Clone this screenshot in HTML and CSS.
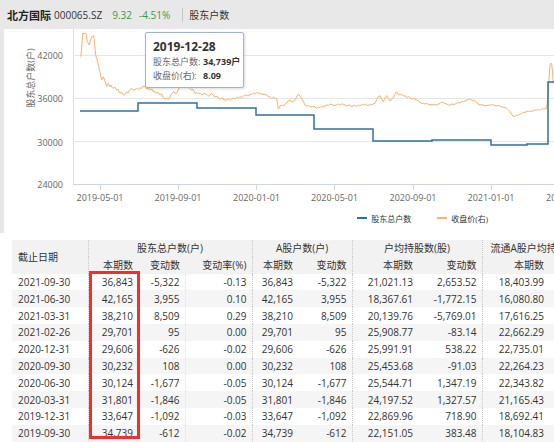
FILE: index.html
```html
<!DOCTYPE html>
<html lang="zh-CN">

<head>
    <meta charset="UTF-8">
    <meta name="viewport" content="width=device-width, initial-scale=1.0">
    <title>北方国际 股东户数</title>
    <link rel="stylesheet" href="styles.css">
</head>

<body>
    <header class="topbar">
        <span class="stock-name">北方国际</span>
        <span class="stock-code">000065.SZ</span>
        <span class="price down">9.32</span>
        <span class="change down">-4.51%</span>
        <span class="divider"></span>
        <span class="tab">股东户数</span>
    </header>

    <div class="chart-panel">
        <div class="chart">
            <svg class="plot" width="550" height="178" viewBox="4 29 550 178">
                <g class="grid">
                    <line x1="73" y1="55.5" x2="554" y2="55.5" />
                    <line x1="73" y1="98.5" x2="554" y2="98.5" />
                    <line x1="73" y1="141.5" x2="554" y2="141.5" />
                </g>
                <line class="y-axis" x1="73.5" y1="29" x2="73.5" y2="184" />
                <line class="x-axis" x1="73" y1="184.5" x2="554" y2="184.5" />
                <g class="ticks">
                    <line x1="100.5" y1="184" x2="100.5" y2="190" />
                    <line x1="178.5" y1="184" x2="178.5" y2="190" />
                    <line x1="256.5" y1="184" x2="256.5" y2="190" />
                    <line x1="334.5" y1="184" x2="334.5" y2="190" />
                    <line x1="413.5" y1="184" x2="413.5" y2="190" />
                    <line x1="491.5" y1="184" x2="491.5" y2="190" />
                </g>

                <text class="y-title" transform="translate(30 78) rotate(-90)">股东总户数(户)</text>
                <g class="y-labels">
                    <text x="63" y="58.5">42000</text>
                    <text x="63" y="102">36000</text>
                    <text x="63" y="145.5">30000</text>
                    <text x="63" y="188">24000</text>
                </g>
                <g class="x-labels">
                    <text x="100" y="200.5">2019-05-01</text>
                    <text x="178" y="200.5">2019-09-01</text>
                    <text x="256.5" y="200.5">2020-01-01</text>
                    <text x="334.5" y="200.5">2020-05-01</text>
                    <text x="413" y="200.5">2020-09-01</text>
                    <text x="491" y="200.5">2021-01-01</text>
                    <text x="569.5" y="200.5">2021-05-01</text>
                </g>

                <!-- 收盘价(右) -->
                <polyline class="price-line" points="80.7,56.7 81.5,50 82.7,33.3 84,34 85,33 86,33.5 87.3,41.7 88.3,43 89.3,45 90,42 90.7,40 91.7,37 92.7,36 93.4,35.5 94,38 94.8,46 95.7,55 96.5,58 97.3,60 98,64 98.7,66.7 99.3,70 100,71.7 100.8,76 101.7,80 102.5,78 103.3,76.7 104.2,79 105,81.7 105.8,84 106.7,86.7 107.5,84 108.3,83.3 109.2,85 110,86.7 111,85 112,87.5 113.3,88.3 115,87 116.7,90 118,89 119,92 120,93.3 121.5,92 123.3,95 125,94 126.7,91.7 128,93 129.5,90 131.7,88.3 133,90 135,90 136.5,88 138,89.5 140,87.7 141.5,88.5 143,86 145,86.7 147,89 148.5,88 150,90 152,89 153.5,92 155,91.7 157,93 158.5,92.5 160,95 161.5,94 163,97 165,99 166.5,98 168,99.5 170,96.7 171.5,94 173.3,91.7 175,93 176.7,93.3 178,90 180,86.7 181.5,87.5 183.3,84.3 184.5,83 185.5,84 186.7,85 188,87 190,88.3 191.5,90 193,89.5 195,93.3 197,92.5 198.5,94 200,93.3 202,95 204,93.5 206.7,94.3 208.5,96 210,95 211.5,93.5 213.3,95 215,97 217,96 218.5,98 220,99 222,98 224,100 226.7,100 228.5,99 230,100.5 231.5,99 233.3,98.3 235,99 237,97 238.5,98 240,96.7 242,97.5 244,95.5 246.7,95 248.5,96 250,94 251.5,94.5 253.3,93.3 255,94 257,92.5 258.5,93 260,93.3 262,94.5 264,94 266.7,95 268.5,97 270,96.7 271.7,98.3 273.5,97 275,98.3 276.7,99 277.5,104 278.3,109 280,106 281.7,105 283.5,106 285,104 286.7,103.3 288,101 290,100 291.5,102 293.3,101.7 295,100 296.5,97 298.3,94 300,96 301.7,98.3 303,101 305,105 307,106 308.5,105.5 310,106.7 312,107 314,106 316.7,108.3 318.5,107 320,107.5 321.5,106 323.3,106.7 325,106 327,105 328.5,105.5 330,104 332,104.5 334,105.5 336.7,105 338.5,104 340,105 341.5,104 343.3,104.3 345,105 347,106 348.5,105 350,105.7 352,106.5 354,105.5 356.7,106 358.5,105 360,106 361.5,104.5 363.3,105 365,104 367,105.5 368.5,105 370,105 372,104.5 375,103.3 376.5,100 378.3,96.7 380,95.7 381.5,99 383.3,101.7 385,98 386.7,95.7 388,98 390,101 391.5,99 393.3,97.7 395,94 396.7,91.7 398,94 400,95 401.5,94.5 403.3,95.7 405,96 407,97.5 408.5,96.5 410,97.7 412,99 414,98.5 416.7,100 418.5,101 420,102 421.5,103.5 423.3,103.3 425,104 427,103.5 428.5,104.5 430,104.3 432,105 434,104.5 436.7,105 438.5,104 440,103.5 441.5,102 443.3,102.7 445,103.5 447,104 448.5,105 450,105 452,104 454,104.5 456.7,103.3 458.5,102.5 460,103 461.5,101.5 463.3,101.7 465,101 467,100 468.5,99.5 470,99 471.5,100 473,100.5 475,101 476.5,102 478,104 480,105 482,104.5 484,105.5 486.7,105.7 488.5,105 490,105.5 491.5,104.5 493.3,105 495,105.5 497,106 498.5,105.5 500,106 502,107 504,107.5 506.7,108.3 508.5,110 510,111.7 511.5,114 513.3,116.7 515,116 516.5,115.5 518.3,115 520,114 521.5,113.5 523.3,112.3 525,112.5 527,111 528.5,111.5 530,111 532,111.5 534,110 536.7,110 538.5,109.5 540,110.5 541.5,109 543.3,109 545,108.5 546.7,108.3 547.5,100 548.3,91.7 549,78 550,65 550.8,63 551.7,64.3 552.5,72 553.3,83.3 554,80" />

                <!-- 股东总户数 -->
                <path class="holders-line" d="M80,111 H138 V103 H197 V108 H256 V115 H314 V129 H373 V141 H432 V140 H491 V145 H527 V144 H548 V82 H554" />
            </svg>

            <div class="tooltip">
                <div class="tip-date">2019-12-28</div>
                <div class="tip-row"><span class="tip-label">股东总户数:</span><b>34,739户</b></div>
                <div class="tip-row"><span class="tip-label">收盘价(右):</span><b>8.09</b></div>
            </div>
        </div>

        <div class="legend">
            <span class="legend-item"><i class="swatch holders"></i>股东总户数</span>
            <span class="legend-item"><i class="swatch price"></i>收盘价(右)</span>
        </div>
    </div>

    <div class="table-section">
        <table class="holders-table">
            <colgroup>
                <col style="width: 76px">
                <col style="width: 50px">
                <col style="width: 47px">
                <col style="width: 67px">
                <col style="width: 46px">
                <col style="width: 54px">
                <col style="width: 66px">
                <col style="width: 64px">
                <col style="width: 72px">
            </colgroup>
            <thead>
                <tr>
                    <th rowspan="2" class="date-head">截止日期</th>
                    <th colspan="3" class="group sep">股东总户数(户)</th>
                    <th colspan="2" class="group sep">A股户数(户)</th>
                    <th colspan="2" class="group sep">户均持股数(股)</th>
                    <th class="group last sep">流通A股户均持股数(股)</th>
                </tr>
                <tr>
                    <th class="sep">本期数</th>
                    <th>变动数</th>
                    <th>变动率(%)</th>
                    <th class="sep">本期数</th>
                    <th>变动数</th>
                    <th class="sep">本期数</th>
                    <th>变动数</th>
                    <th class="sep last-col">本期数</th>
                </tr>
            </thead>
            <tbody>
                <tr>
                    <td>2021-09-30</td><td>36,843</td><td>-5,322</td><td>-0.13</td><td>36,843</td><td>-5,322</td><td>21,021.13</td><td>2,653.52</td><td>18,403.99</td>
                </tr>
                <tr>
                    <td>2021-06-30</td><td>42,165</td><td>3,955</td><td>0.10</td><td>42,165</td><td>3,955</td><td>18,367.61</td><td>-1,772.15</td><td>16,080.80</td>
                </tr>
                <tr>
                    <td>2021-03-31</td><td>38,210</td><td>8,509</td><td>0.29</td><td>38,210</td><td>8,509</td><td>20,139.76</td><td>-5,769.01</td><td>17,616.25</td>
                </tr>
                <tr>
                    <td>2021-02-26</td><td>29,701</td><td>95</td><td>0.00</td><td>29,701</td><td>95</td><td>25,908.77</td><td>-83.14</td><td>22,662.29</td>
                </tr>
                <tr>
                    <td>2020-12-31</td><td>29,606</td><td>-626</td><td>-0.02</td><td>29,606</td><td>-626</td><td>25,991.91</td><td>538.22</td><td>22,735.01</td>
                </tr>
                <tr>
                    <td>2020-09-30</td><td>30,232</td><td>108</td><td>0.00</td><td>30,232</td><td>108</td><td>25,453.68</td><td>-91.03</td><td>22,264.23</td>
                </tr>
                <tr>
                    <td>2020-06-30</td><td>30,124</td><td>-1,677</td><td>-0.05</td><td>30,124</td><td>-1,677</td><td>25,544.71</td><td>1,347.19</td><td>22,343.82</td>
                </tr>
                <tr>
                    <td>2020-03-31</td><td>31,801</td><td>-1,846</td><td>-0.05</td><td>31,801</td><td>-1,846</td><td>24,197.52</td><td>1,327.57</td><td>21,165.43</td>
                </tr>
                <tr>
                    <td>2019-12-31</td><td>33,647</td><td>-1,092</td><td>-0.03</td><td>33,647</td><td>-1,092</td><td>22,869.96</td><td>718.90</td><td>18,692.41</td>
                </tr>
                <tr>
                    <td>2019-09-30</td><td>34,739</td><td>-612</td><td>-0.02</td><td>34,739</td><td>-612</td><td>22,151.05</td><td>383.48</td><td>18,104.83</td>
                </tr>
            </tbody>
        </table>

        <!-- 本期数 highlight -->
        <div class="highlight"></div>
    </div>
</body>

</html>
```

FILE: styles.css
```css
body {
    margin: 0;
    width: 554px;
    height: 442px;
    overflow: hidden;
    background-color: #e8e8e8;
    font-family: "Open Sans", "Noto Sans CJK SC", sans-serif;
    color: #333;
}

/* top bar */
.topbar {
    height: 29px;
    display: flex;
    align-items: center;
    padding-left: 7px;
    font-size: 10px;
    white-space: nowrap;
}

.stock-name {
    font-size: 11px;
    font-weight: bold;
    color: #222;
}

.stock-code {
    margin-left: 3px;
}

.price {
    margin-left: 10px;
}

.change {
    margin-left: 7px;
}

.down {
    color: #3a9a4f;
}

.divider {
    width: 1px;
    height: 14px;
    margin-left: 12px;
    background-color: #c8c8c8;
}

.tab {
    margin-left: 6px;
}

/* chart */
.chart-panel {
    margin-left: 4px;
    height: 204px;
    background-color: white;
}

.chart {
    position: relative;
    height: 178px;
}

.plot {
    display: block;
}

.grid line {
    stroke: #e6e6e6;
    stroke-width: 1;
}

.y-axis {
    stroke: #e0e0e0;
    stroke-width: 1;
}

.x-axis,
.ticks line {
    stroke: #ccd6eb;
    stroke-width: 1;
}

.plot text {
    font-family: "Open Sans", "Noto Sans CJK SC", sans-serif;
    font-size: 9px;
    fill: #666;
}

.y-labels text {
    text-anchor: end;
}

.x-labels text,
.y-title {
    text-anchor: middle;
}

.y-title {
    dominant-baseline: central;
}

.price-line {
    fill: none;
    stroke: #f8b26c;
    stroke-width: 1;
    stroke-linejoin: round;
}

.holders-line {
    fill: none;
    stroke: #2d72a6;
    stroke-width: 1.5;
}

.tooltip {
    position: absolute;
    left: 141px;
    top: 3px;
    width: 99px;
    height: 56px;
    box-sizing: border-box;
    padding: 6px 0 0 7px;
    background-color: rgba(255, 255, 255, 0.96);
    border: 1px solid #9fb3cf;
    border-radius: 2px;
    box-shadow: 1px 1px 3px rgba(0, 0, 0, 0.15);
    white-space: nowrap;
}

.tip-date {
    font-size: 12px;
    font-weight: bold;
    line-height: 16px;
    color: #333;
}

.tip-row {
    font-size: 9px;
    line-height: 14px;
}

.tip-label {
    display: inline-block;
    width: 50px;
    color: #666;
}

.tip-row b {
    color: #333;
}

.legend {
    height: 22px;
    display: flex;
    align-items: center;
    justify-content: flex-end;
    gap: 16px;
    padding-right: 66px;
    font-size: 8px;
    color: #333;
}

.legend-item {
    display: flex;
    align-items: center;
}

.swatch {
    width: 10px;
    height: 2px;
    margin-right: 4px;
}

.swatch.holders {
    background-color: #2d72a6;
}

.swatch.price {
    background-color: #f8b26c;
}

/* table */
.table-section {
    position: relative;
    padding: 7px 0 0 12px;
    height: 202px;
    background-color: white;
}

.holders-table {
    width: 542px;
    table-layout: fixed;
    border-collapse: collapse;
    font-size: 10px;
}

.holders-table tr {
    height: 16.8px;
}

.holders-table th,
.holders-table td {
    padding: 0 5px 0 0;
    line-height: 12px;
    text-align: right;
    white-space: nowrap;
    overflow: visible;
}

.holders-table th {
    font-weight: normal;
    background-color: #f2f2f2;
    color: #333;
}

.holders-table th.group {
    text-align: center;
    padding: 0;
}

/* the last group title runs off the right edge */
.holders-table th.group.last {
    text-align: left;
    padding-left: 8px;
    overflow: hidden;
}

.holders-table th.last-col,
.holders-table td:nth-child(9) {
    padding-right: 10px;
}

.holders-table th.date-head,
.holders-table td:first-child {
    text-align: left;
    padding-left: 6px;
}

.holders-table .sep,
.holders-table td:nth-child(2),
.holders-table td:nth-child(5),
.holders-table td:nth-child(7),
.holders-table td:nth-child(9) {
    border-left: 1px dotted #c8c8c8;
}

.holders-table td:nth-child(4) {
    border-left: 1px dotted #e2e2e2;
}

.holders-table tbody tr:nth-child(even) {
    background-color: #f5f5f5;
}

.highlight {
    position: absolute;
    left: 89px;
    top: 38px;
    width: 51px;
    height: 168px;
    box-sizing: border-box;
    border: 3px solid #f0302e;
}
```
